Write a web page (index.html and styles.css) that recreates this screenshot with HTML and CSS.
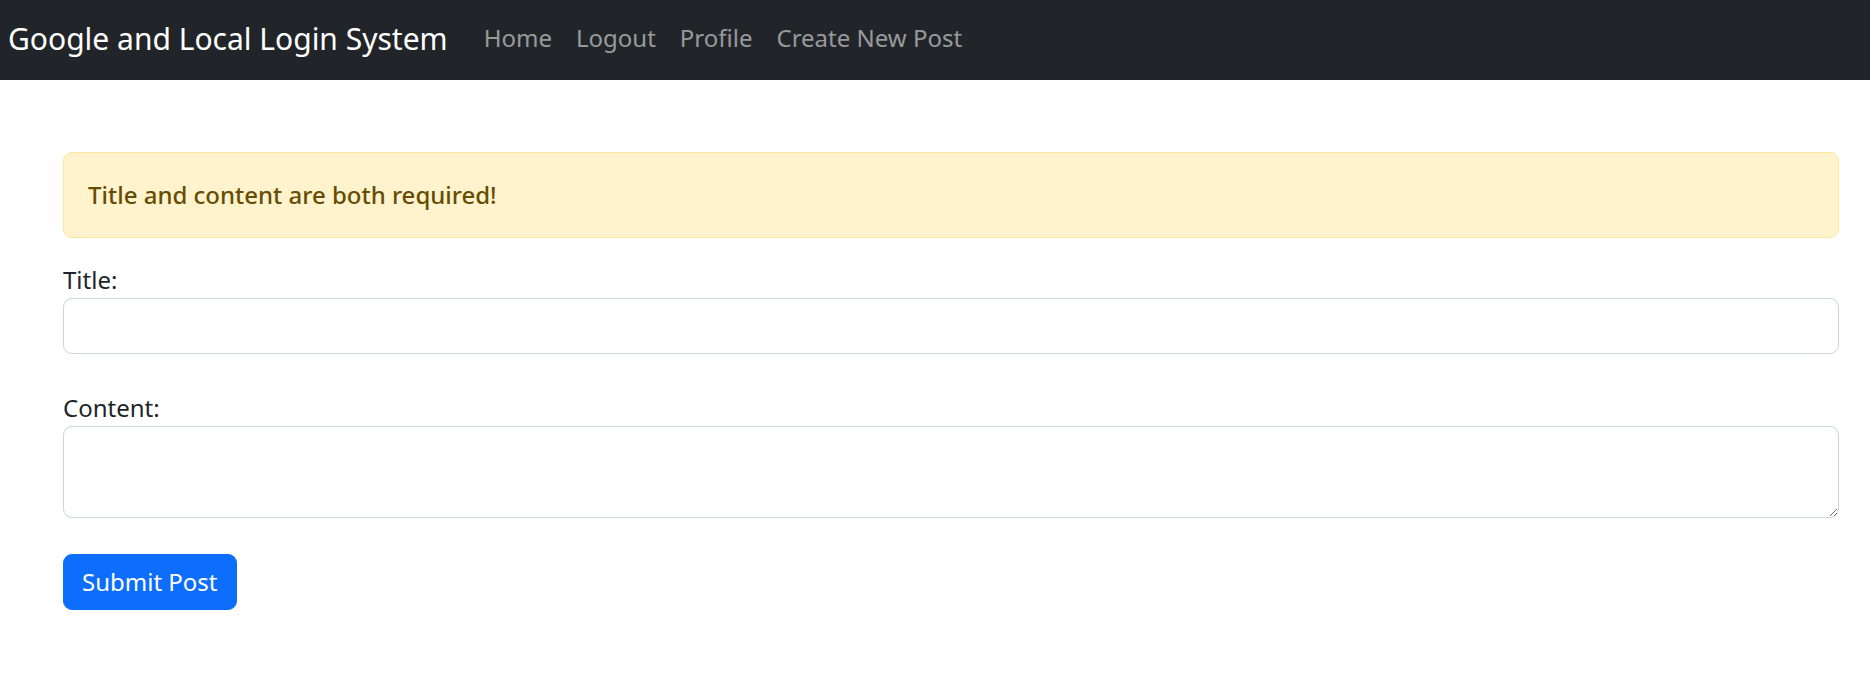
FILE: index.html
```html
<!DOCTYPE html>
<html lang="en">
<head>
<meta charset="utf-8">
<title>Create New Post</title>
<link rel="stylesheet" href="styles.css">
</head>
<body>
<nav class="navbar">
  <a class="brand" href="#">Google and Local Login System</a>
  <ul class="nav">
    <li><a class="nav-link" href="#">Home</a></li>
    <li><a class="nav-link" href="#">Logout</a></li>
    <li><a class="nav-link" href="#">Profile</a></li>
    <li><a class="nav-link" href="#">Create New Post</a></li>
  </ul>
</nav>
<main class="container">
  <div class="alert">Title and content are both required!</div>
  <form class="post-form">
    <div class="field">
      <label for="title">Title:</label>
      <input id="title" class="control" type="text">
    </div>
    <div class="field">
      <label for="content">Content:</label>
      <textarea id="content" class="control area" rows="2"></textarea>
    </div>
    <button class="btn" type="button">Submit Post</button>
  </form>
</main>
</body>
</html>
```
FILE: styles.css
```css
* { box-sizing: border-box; }
html, body { margin: 0; padding: 0; }
body {
  font-family: "Noto Sans", "Open Sans", sans-serif;
  font-size: 24px;
  line-height: 1.5;
  color: #212529;
  background: #fff;
}
.navbar {
  height: 80px;
  background: #212529;
  display: flex;
  align-items: center;
  padding: 0 8px 4px 8px;
}
.brand {
  color: #fff;
  text-decoration: none;
  font-size: 30px;
  line-height: 45px;
  margin-right: 24px;
}
.nav {
  list-style: none;
  margin: 0;
  padding: 0;
  display: flex;
}
.nav-link {
  display: block;
  padding: 0 12px;
  color: rgba(255, 255, 255, 0.55);
  text-decoration: none;
}
.container {
  padding: 72px 31px 0 63px;
}
.alert {
  background: #fff3cd;
  border: 1px solid #ffe69c;
  color: #664d03;
  font-weight: 500;
  border-radius: 9px;
  padding: 24px;
  margin-bottom: 24px;
}
.field {
  margin-bottom: 36px;
}
.field label {
  display: block;
}
.control {
  display: block;
  width: 100%;
  font: inherit;
  padding: 9px 18px;
  border: 1px solid #ced4da;
  border-radius: 9px;
  background: #fff;
  color: #212529;
  height: 56px;
}
.area {
  height: 92px;
  resize: vertical;
}
.btn {
  font: inherit;
  color: #fff;
  background: #0d6efd;
  border: 1px solid #0d6efd;
  border-radius: 9px;
  padding: 9px 18px;
  height: 56px;
}
```
